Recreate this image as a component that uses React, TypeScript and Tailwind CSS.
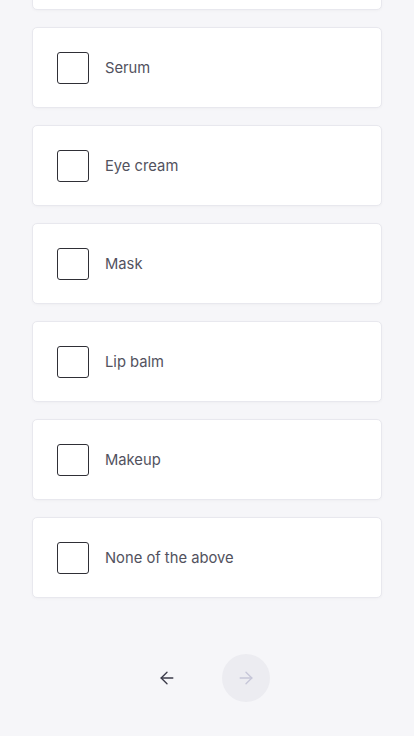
import { ArrowLeft, ArrowRight } from 'lucide-react'

const options = ['', 'Serum', 'Eye cream', 'Mask', 'Lip balm', 'Makeup', 'None of the above']

const OptionCard = ({ label }: { label: string }) => {
	return (
		<label className="flex h-[81px] items-center gap-4 rounded-[5px] border border-[#e8e8ee] bg-white px-6 shadow-[0_1px_3px_rgba(0,0,0,0.03)]">
			<span className="h-8 w-8 shrink-0 rounded-[3px] border-[1.5px] border-[#2f2f36]" />
			<span className="pt-[2px] text-[14.75px] text-[#52525e]">{label}</span>
		</label>
	)
}

export default function App() {
	return (
		<div className="h-[736px] overflow-hidden bg-[#f6f6f9] font-['Inter',sans-serif]">
			<div className="mx-[32px] -mt-[71px] flex flex-col gap-[17px]">
				{options.map((o, i) => (
					<OptionCard key={i} label={o} />
				))}
			</div>
			<div className="mt-[56px] flex items-center justify-center gap-[31px] pr-[2px]">
				<button className="flex h-12 w-12 items-center justify-center text-[#3b3b4a]">
					<ArrowLeft size={20} strokeWidth={1.6} />
				</button>
				<button className="flex h-12 w-12 items-center justify-center rounded-full bg-[#ececf1] text-[#c6c6d8]">
					<ArrowRight size={20} strokeWidth={1.6} />
				</button>
			</div>
		</div>
	)
}
